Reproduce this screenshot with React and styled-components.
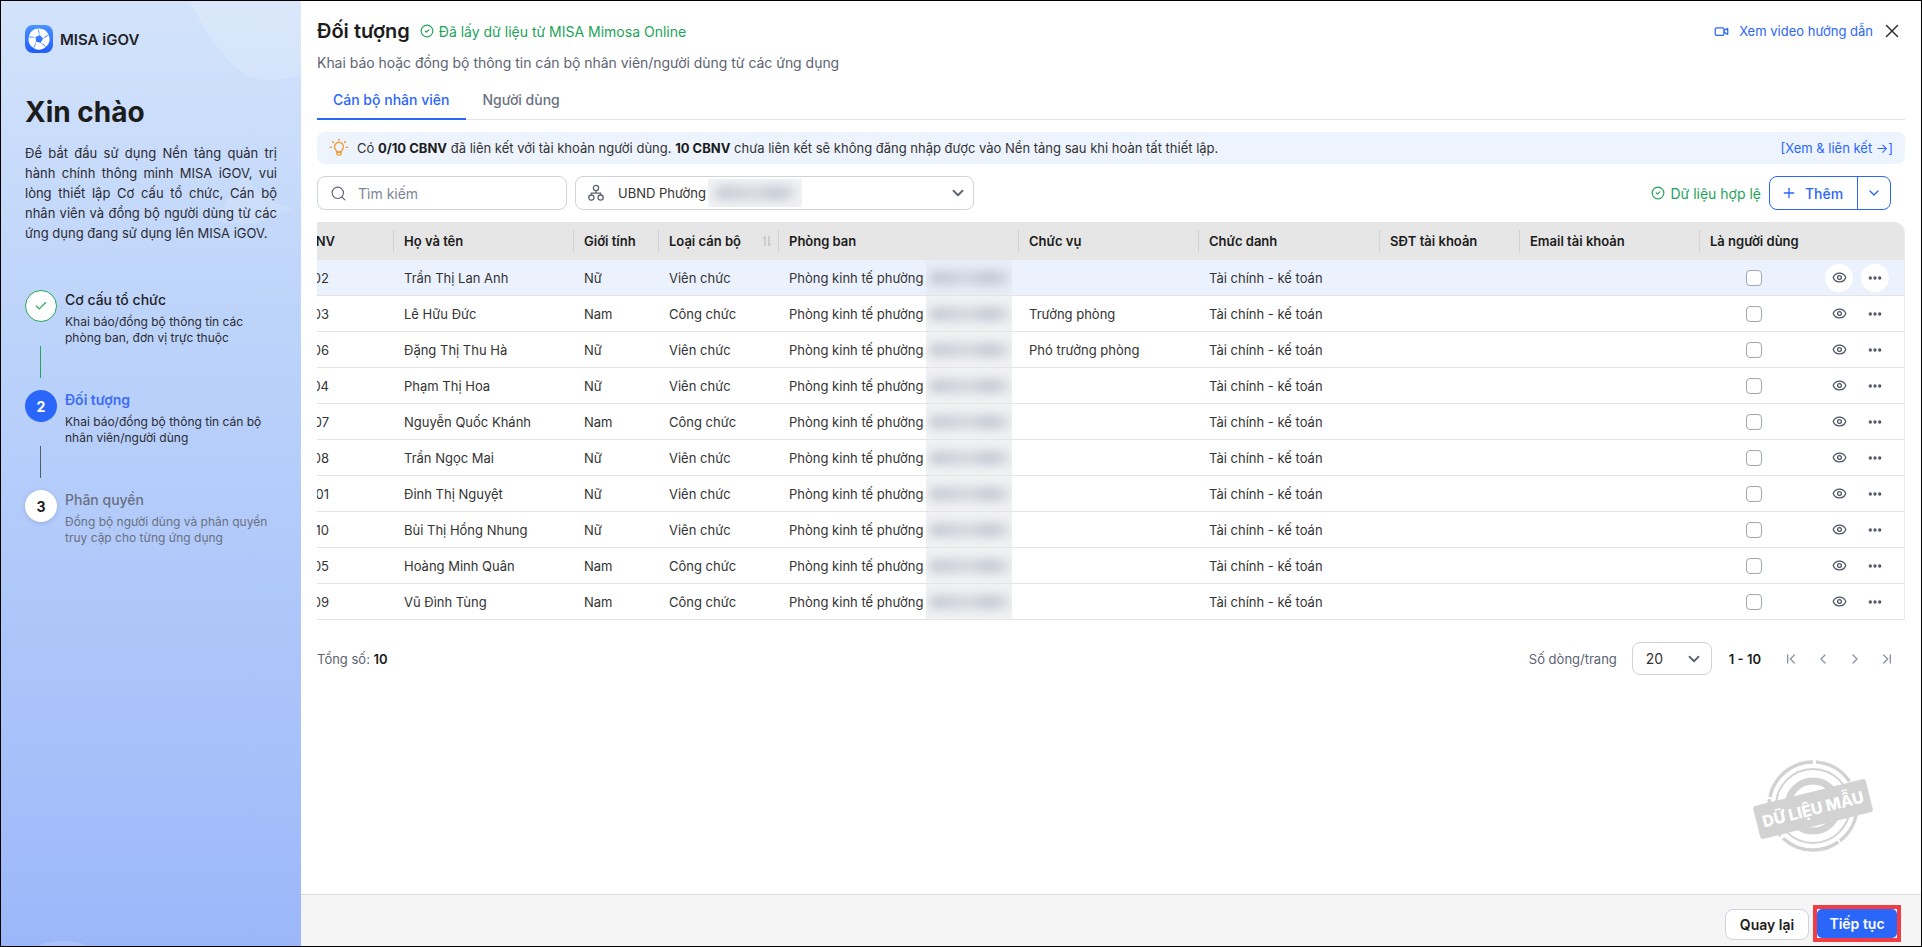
import React from 'react';
import styled, { createGlobalStyle } from 'styled-components';
import {
  CircleCheck, Video, X, Search, ChevronDown, Plus, Eye, Ellipsis,
  ChevronLeft, ChevronRight, ChevronFirst, ChevronLast, Check,
} from 'lucide-react';

const Global = createGlobalStyle`
  html, body { margin: 0; padding: 0; background: #fff; }
  * { box-sizing: border-box; }
  body { font-family: Inter, "Noto Sans", sans-serif; color: #333; overflow: hidden; }
`;

const Frame = styled.div`
  width: 1922px;
  height: 947px;
  border: 1px solid #000;
  display: flex;
  overflow: hidden;
`;

/* left panel */
const Side = styled.aside`
  position: relative;
  flex: 0 0 300px;
  padding: 24px;
  overflow: hidden;
  background: linear-gradient(180deg, #d3e3fb 0%, #bcd3fa 35%, #a9c3fa 75%, #9cb7f9 100%);
`;
const SideDecor = styled.svg`
  position: absolute;
  inset: 0;
  width: 300px;
  height: 945px;
  pointer-events: none;
`;
const Brand = styled.div`
  position: relative;
  display: flex;
  align-items: center;
  gap: 7px;
  height: 28px;
  font-size: 15px;
  font-weight: 600;
  color: #1f2228;
`;
const Hello = styled.h1`
  position: relative;
  margin: 41px 0 13px;
  font-size: 28px;
  line-height: 36px;
  font-weight: 700;
  color: #1c1c1c;
`;
const Intro = styled.p`
  position: relative;
  margin: 0 0 47px;
  font-size: 13px;
  line-height: 20px;
  text-align: justify;
  color: #2b2b33;
`;
const Step = styled.div`
  position: relative;
  display: flex;
  gap: 8px;
`;
const StepRail = styled.div`
  flex: 0 0 32px;
  display: flex;
  flex-direction: column;
  align-items: center;
`;
const StepDot = styled.div`
  width: 32px;
  height: 32px;
  border-radius: 50%;
  display: flex;
  align-items: center;
  justify-content: center;
  font-size: 14px;
  font-weight: 700;
  color: ${p => (p.$state === 'active' ? '#fff' : '#1c1c1c')};
  background: ${p => (p.$state === 'active' ? '#2b66fb' : '#fff')};
  border: ${p => (p.$state === 'done' ? '1px solid #25a55a' : 'none')};
  box-shadow: ${p => (p.$state === 'todo' ? '0 1px 4px rgba(60,80,130,.25)' : 'none')};
`;
const StepLine = styled.div`
  width: 1px;
  height: 32px;
  margin: 24px 1px 12px 0;
  background: ${p => p.$color};
`;
const StepTitle = styled.div`
  font-size: 14px;
  line-height: 20px;
  font-weight: ${p => (p.$state === 'active' ? 600 : 500)};
  color: ${p => (p.$state === 'active' ? '#3b6cfb' : p.$state === 'todo' ? '#6a7080' : '#1f2228')};
`;
const StepDesc = styled.div`
  margin-top: 4px;
  font-size: 12px;
  line-height: 16px;
  color: ${p => (p.$state === 'todo' ? '#6a7080' : '#2b2b33')};
`;

/* right panel */
const Main = styled.main`
  position: relative;
  flex: 1;
  min-width: 0;
  display: flex;
  flex-direction: column;
  background: #fff;
`;
const Content = styled.div`
  flex: 1;
  padding: 16px 16px 0;
`;
const TitleRow = styled.div`
  display: flex;
  align-items: center;
  height: 28px;
  padding-right: 2px;
`;
const Title = styled.h2`
  margin: 0 10px 0 0;
  font-size: 20px;
  font-weight: 600;
  color: #1c1c1c;
`;
const GreenNote = styled.span`
  display: inline-flex;
  align-items: center;
  gap: 5px;
  font-size: 14px;
  color: #22a35a;
`;
const VideoLink = styled.a`
  margin-left: auto;
  display: inline-flex;
  align-items: center;
  gap: 10px;
  font-size: 13px;
  color: #2b66fb;
`;
const CloseBtn = styled.span`
  display: inline-flex;
  margin-left: 8px;
  color: #333;
`;
const Subtitle = styled.div`
  margin-top: 8px;
  font-size: 14px;
  line-height: 20px;
  letter-spacing: -0.03px;
  color: #5c6370;
`;
const Tabs = styled.div`
  display: flex;
  margin-top: 9px;
  height: 38px;
  border-bottom: 1px solid #e4e4e4;
`;
const Tab = styled.div`
  height: 38px;
  padding: 0 17px 2px 16px;
  display: flex;
  align-items: center;
  font-size: 14px;
  font-weight: 500;
  color: ${p => (p.$active ? '#2b66fb' : '#6b7280')};
  border-bottom: 2px solid ${p => (p.$active ? '#2b66fb' : 'transparent')};
`;
const Banner = styled.div`
  margin-top: 12px;
  height: 32px;
  padding: 0 12px 0 12px;
  display: flex;
  align-items: center;
  border-radius: 8px;
  background: #eef4fe;
  font-size: 13px;
  color: #333;
  b { font-weight: 700; color: #1c1c1c; }
`;
const BannerIcon = styled.svg`
  flex: 0 0 20px;
  margin-right: 8px;
`;
const BannerLink = styled.a`
  margin-left: auto;
  color: #2b66fb;
`;
const Toolbar = styled.div`
  margin-top: 12px;
  height: 34px;
  padding-right: 14px;
  display: flex;
  align-items: stretch;
`;
const SearchBox = styled.div`
  width: 250px;
  padding: 0 12px;
  display: flex;
  align-items: center;
  gap: 11px;
  border: 1px solid #cfd3da;
  border-radius: 8px;
  font-size: 14px;
  color: #7d8696;
  svg { color: #5c6370; }
`;
const UnitSelect = styled.div`
  width: 399px;
  margin-left: 8px;
  padding: 0 6px 0 12px;
  display: flex;
  align-items: center;
  border: 1px solid #cfd3da;
  border-radius: 8px;
  font-size: 13px;
  color: #333;
  svg { color: #5c6370; }
`;
const UnitName = styled.span`
  margin: 0 2px 0 14px;
`;
const Caret = styled(ChevronDown)`
  margin-left: auto;
`;
const ValidNote = styled(GreenNote)`
  margin-left: auto;
  margin-right: 8px;
`;
const SplitBtn = styled.div`
  display: flex;
  width: 122px;
  border: 1.5px solid #2b66fb;
  border-radius: 8px;
  color: #2b66fb;
  font-size: 14px;
  font-weight: 500;
`;
const SplitMain = styled.div`
  flex: 1;
  display: flex;
  align-items: center;
  justify-content: center;
  gap: 8px;
  padding-right: 3px;
  border-right: 1.5px solid #2b66fb;
`;
const SplitSide = styled.div`
  flex: 0 0 32px;
  display: flex;
  align-items: center;
  justify-content: center;
`;

/* table */
const COLS = '76px 180px 85px 120px 240px 180px 181px 140px 180px 1fr';
const Table = styled.div`
  margin-top: 12px;
  border-right: 1px solid #ececec;
  border-top-right-radius: 10px;
`;
const HeadRow = styled.div`
  display: grid;
  grid-template-columns: ${COLS};
  align-items: center;
  height: 38px;
  background: #e6e6e6;
  border-top-right-radius: 10px;
  font-size: 13px;
  font-weight: 600;
  color: #1c1c1c;
`;
const HeadCell = styled.div`
  height: 22px;
  padding: 0 6px 0 10px;
  display: flex;
  align-items: center;
  justify-content: space-between;
  border-left: 1px solid #d2d2d2;
  white-space: nowrap;
`;
const CodeHead = styled.div`
  height: 22px;
  padding-right: 58px;
  display: flex;
  align-items: center;
  justify-content: flex-end;
  overflow: hidden;
  white-space: nowrap;
`;
const Row = styled.div`
  display: grid;
  grid-template-columns: ${COLS};
  height: 36px;
  border-bottom: 1px solid #e4e4e4;
  background: ${p => (p.$selected ? '#ebf2fe' : '#fff')};
  font-size: 13px;
  color: #333;
`;
const Cell = styled.div`
  padding-left: 11px;
  display: flex;
  align-items: center;
  white-space: nowrap;
  overflow: hidden;
`;
const CodeCell = styled.div`
  padding-right: 64px;
  display: flex;
  align-items: center;
  justify-content: flex-end;
  overflow: hidden;
  white-space: nowrap;
`;
const Patch = styled.span`
  align-self: stretch;
  flex: 0 0 86px;
  margin-left: 3px;
  display: flex;
  align-items: center;
  justify-content: center;
  overflow: hidden;
  background: ${p => (p.$tint ? '#e8edf6' : '#f1f2f4')};
`;
const Smudge = styled.span`
  display: block;
  width: 80px;
  height: 12px;
  border-radius: 6px;
  background: linear-gradient(90deg, #a2a9ba 0%, #c3c8d2 50%, #a2a9ba 75%, #c3c8d2 100%);
  opacity: .7;
  filter: blur(6px);
`;
const UnitPatch = styled(Patch)`
  flex: 0 0 94px;
  margin: 2px 0;
  background: #f1f2f4;
`;
const UserCell = styled.div`
  display: flex;
  align-items: center;
  padding-left: 47px;
`;
const Tick = styled.span`
  width: 16px;
  height: 16px;
  border: 1px solid #a0a6b4;
  border-radius: 4px;
  background: #fff;
`;
const RoundBtn = styled.span`
  width: 28px;
  height: 28px;
  border-radius: 50%;
  display: flex;
  align-items: center;
  justify-content: center;
  color: #4b5260;
  background: ${p => (p.$on ? '#fff' : 'transparent')};
  margin-left: ${p => p.$gap}px;
`;

const Pager = styled.div`
  margin-top: 22px;
  height: 33px;
  padding-right: 2px;
  display: flex;
  align-items: center;
  font-size: 13px;
  color: #5c6370;
  b { font-weight: 600; color: #1c1c1c; }
`;
const PageSize = styled.div`
  width: 80px;
  height: 33px;
  margin: 0 17px 0 15px;
  padding: 0 8px 0 13px;
  display: flex;
  align-items: center;
  justify-content: space-between;
  border: 1px solid #cfd3da;
  border-radius: 8px;
  font-size: 14px;
  color: #333;
  svg { color: #5c6370; }
`;
const PagerLeft = styled.span`
  margin-right: auto;
`;
const Range = styled.b`
  margin-right: 14px;
`;
const PageBtn = styled.span`
  width: 32px;
  display: flex;
  justify-content: center;
  color: #8d93a0;
`;

const Stamp = styled.svg`
  position: absolute;
  right: 46px;
  bottom: 90px;
  pointer-events: none;
`;

const BottomBar = styled.footer`
  flex: 0 0 52px;
  padding: 10px 20px 0 0;
  display: flex;
  justify-content: flex-end;
  align-items: flex-start;
  gap: 4px;
  background: #f5f5f5;
  border-top: 1px solid #d9d9d9;
`;
const BackBtn = styled.div`
  width: 84px;
  height: 31px;
  margin-top: 4px;
  display: flex;
  align-items: center;
  justify-content: center;
  border: 1px solid #d0d3da;
  border-radius: 8px;
  background: #fff;
  font-size: 14px;
  font-weight: 600;
  color: #1c1c1c;
`;
const Marker = styled.div`
  width: 88px;
  height: 37px;
  border: 4px solid #f23d45;
  background: #fff;
`;
const NextBtn = styled.div`
  height: 100%;
  display: flex;
  align-items: center;
  justify-content: center;
  border-radius: 5px;
  background: #2b66fb;
  font-size: 14px;
  font-weight: 600;
  color: #fff;
`;

const Logo = () => (
  <svg width="28" height="28" viewBox="0 0 28 28">
    <defs>
      <linearGradient id="lg" x1="0" y1="0" x2="0" y2="1">
        <stop offset="0" stopColor="#4a93ff" />
        <stop offset="1" stopColor="#1f5dfa" />
      </linearGradient>
    </defs>
    <rect width="28" height="28" rx="8" fill="url(#lg)" />
    {[0, 72, 144, 216, 288].map(a => (
      <path
        key={a}
        transform={`rotate(${a} 14 14)`}
        d="M13.1 3.5A10.5 10.5 0 0 1 23.5 9.6Q20.5 10.5 18 13.6L14.9 10.1Q14.2 6.5 13.1 3.5Z"
        fill="#fff"
      />
    ))}
  </svg>
);

const Bulb = () => (
  <BannerIcon width="20" height="20" viewBox="0 0 20 20" fill="none" stroke="#f29a2e" strokeWidth="1.4" strokeLinecap="round">
    <path d="M6.6 11.6a4.4 4.4 0 1 1 6.8 0c-.6.8-1 1.3-1.1 2.4H7.7c-.1-1.1-.5-1.6-1.1-2.4Z" />
    <path d="M8 16.4c.3 1 3.7 1 4 0V14H8Z" />
    <path d="M10 1.2v1.2M3.6 3.6l.9.9M16.4 3.6l-.9.9M1.4 9.4h1.2M17.4 9.4h1.2" />
  </BannerIcon>
);

const OrgIcon = () => (
  <svg width="16" height="18" viewBox="0 0 16 18" fill="none" stroke="currentColor" strokeWidth="1.3">
    <circle cx="8" cy="4" r="2.6" />
    <circle cx="3.4" cy="13.6" r="2.6" />
    <circle cx="12.6" cy="13.6" r="2.6" />
    <path d="M8 6.6v2.6M3.4 11V9.2h9.2V11" />
  </svg>
);

const SortIcon = () => (
  <svg width="10" height="12" viewBox="0 0 10 12" fill="none" stroke="#b4b4b4" strokeWidth="1">
    <path d="M3 11V1.5L1 3.5M7 1v9.5l2-2" />
  </svg>
);

const DUMMY = [
  ['NV0002', 'Trần Thị Lan Anh', 'Nữ', 'Viên chức', ''],
  ['NV0003', 'Lê Hữu Đức', 'Nam', 'Công chức', 'Trưởng phòng'],
  ['NV0006', 'Đặng Thị Thu Hà', 'Nữ', 'Viên chức', 'Phó trưởng phòng'],
  ['NV0004', 'Phạm Thị Hoa', 'Nữ', 'Viên chức', ''],
  ['NV0007', 'Nguyễn Quốc Khánh', 'Nam', 'Công chức', ''],
  ['NV0008', 'Trần Ngọc Mai', 'Nữ', 'Viên chức', ''],
  ['NV0001', 'Đinh Thị Nguyệt', 'Nữ', 'Viên chức', ''],
  ['NV0010', 'Bùi Thị Hồng Nhung', 'Nữ', 'Viên chức', ''],
  ['NV0005', 'Hoàng Minh Quân', 'Nam', 'Công chức', ''],
  ['NV0009', 'Vũ Đình Tùng', 'Nam', 'Công chức', ''],
];

const STEPS = [
  { state: 'done', title: 'Cơ cấu tổ chức', desc: ['Khai báo/đồng bộ thông tin các', 'phòng ban, đơn vị trực thuộc'], line: '#25a55a' },
  { state: 'active', n: 2, title: 'Đối tượng', desc: ['Khai báo/đồng bộ thông tin cán bộ', 'nhân viên/người dùng'], line: '#555a66' },
  { state: 'todo', n: 3, title: 'Phân quyền', desc: ['Đồng bộ người dùng và phân quyền', 'truy cập cho từng ứng dụng'] },
];

export default function App() {
  return (
    <Frame>
      <Global />
      <Side>
        <SideDecor viewBox="0 0 300 945">
          <path d="M188 0 C205 30 222 62 250 76 C270 84 285 76 300 74 L300 0 Z" fill="#fff" opacity=".18" />
          <path d="M245 170 C250 190 262 198 292 208 C270 214 262 218 258 222 C240 226 226 222 212 220 C222 205 232 190 245 170 Z" fill="#fff" opacity=".13" />
          <ellipse cx="62" cy="948" rx="26" ry="8" fill="#fff" opacity=".15" />
        </SideDecor>
        <Brand><Logo />MISA iGOV</Brand>
        <Hello>Xin chào</Hello>
        <Intro>
          Để bắt đầu sử dụng Nền tảng quản trị hành chính thông minh MISA iGOV, vui lòng thiết lập Cơ cấu tổ chức, Cán bộ nhân viên và đồng bộ người dùng từ các ứng dụng đang sử dụng lên MISA iGOV.
        </Intro>
        {STEPS.map(s => (
          <Step key={s.title}>
            <StepRail>
              <StepDot $state={s.state}>
                {s.state === 'done' ? <Check size={14} color="#25a55a" strokeWidth={2} /> : s.n}
              </StepDot>
              {s.line && <StepLine $color={s.line} />}
            </StepRail>
            <div>
              <StepTitle $state={s.state}>{s.title}</StepTitle>
              <StepDesc $state={s.state}>{s.desc[0]}<br />{s.desc[1]}</StepDesc>
            </div>
          </Step>
        ))}
      </Side>

      <Main>
        <Content>
          <TitleRow>
            <Title>Đối tượng</Title>
            <GreenNote><CircleCheck size={14} />Đã lấy dữ liệu từ MISA Mimosa Online</GreenNote>
            <VideoLink><Video size={15} />Xem video hướng dẫn</VideoLink>
            <CloseBtn><X size={22} strokeWidth={1.6} /></CloseBtn>
          </TitleRow>
          <Subtitle>Khai báo hoặc đồng bộ thông tin cán bộ nhân viên/người dùng từ các ứng dụng</Subtitle>
          <Tabs>
            <Tab $active>Cán bộ nhân viên</Tab>
            <Tab>Người dùng</Tab>
          </Tabs>
          <Banner>
            <Bulb />
            <span>Có <b>0/10 CBNV</b> đã liên kết với tài khoản người dùng. <b>10 CBNV</b> chưa liên kết sẽ không đăng nhập được vào Nền tảng sau khi hoàn tất thiết lập.</span>
            <BannerLink>[Xem &amp; liên kết →]</BannerLink>
          </Banner>
          <Toolbar>
            <SearchBox><Search size={17} strokeWidth={1.6} />Tìm kiếm</SearchBox>
            <UnitSelect>
              <OrgIcon />
              <UnitName>UBND Phường</UnitName>
              <UnitPatch><Smudge /></UnitPatch>
              <Caret size={18} strokeWidth={2.4} />
            </UnitSelect>
            <ValidNote><CircleCheck size={14} />Dữ liệu hợp lệ</ValidNote>
            <SplitBtn>
              <SplitMain><Plus size={16} />Thêm</SplitMain>
              <SplitSide><ChevronDown size={16} /></SplitSide>
            </SplitBtn>
          </Toolbar>
          <Table>
            <HeadRow>
              <CodeHead>Mã NV</CodeHead>
              <HeadCell>Họ và tên</HeadCell>
              <HeadCell>Giới tính</HeadCell>
              <HeadCell>Loại cán bộ<SortIcon /></HeadCell>
              <HeadCell>Phòng ban</HeadCell>
              <HeadCell>Chức vụ</HeadCell>
              <HeadCell>Chức danh</HeadCell>
              <HeadCell>SĐT tài khoản</HeadCell>
              <HeadCell>Email tài khoản</HeadCell>
              <HeadCell>Là người dùng</HeadCell>
            </HeadRow>
            {DUMMY.map((r, i) => (
              <Row key={r[0]} $selected={i === 0}>
                <CodeCell>{r[0]}</CodeCell>
                <Cell>{r[1]}</Cell>
                <Cell>{r[2]}</Cell>
                <Cell>{r[3]}</Cell>
                <Cell>Phòng kinh tế phường<Patch $tint={i === 0}><Smudge /></Patch></Cell>
                <Cell>{r[4]}</Cell>
                <Cell>Tài chính - kế toán</Cell>
                <Cell />
                <Cell />
                <UserCell>
                  <Tick />
                  <RoundBtn $on={i === 0} $gap={63}><Eye size={15} strokeWidth={2} /></RoundBtn>
                  <RoundBtn $on={i === 0} $gap={8}><Ellipsis size={16} strokeWidth={3} /></RoundBtn>
                </UserCell>
              </Row>
            ))}
          </Table>
          <Pager>
            <PagerLeft>Tổng số: <b>10</b></PagerLeft>
            <span>Số dòng/trang</span>
            <PageSize>20<ChevronDown size={18} strokeWidth={2.4} /></PageSize>
            <Range>1 - 10</Range>
            <PageBtn><ChevronFirst size={16} /></PageBtn>
            <PageBtn><ChevronLeft size={16} /></PageBtn>
            <PageBtn><ChevronRight size={16} /></PageBtn>
            <PageBtn><ChevronLast size={16} /></PageBtn>
          </Pager>
        </Content>
        <Stamp width="124" height="100" viewBox="0 0 124 100">
          <g fill="none" stroke="#d2d2d2">
            <circle cx="62" cy="50" r="44" strokeWidth="3.5" strokeDasharray="40 2 60 3" />
            <circle cx="62" cy="50" r="37" strokeWidth="2" />
            <circle cx="62" cy="50" r="25" strokeWidth="7" />
          </g>
          <g transform="rotate(-14 62 53)">
            <rect x="4" y="36" width="116" height="34" rx="3" fill="#d2d2d2" />
            <text x="62" y="59" textAnchor="middle" fontSize="16" fontWeight="800" fill="#fff" fontFamily="Inter, sans-serif">DỮ LIỆU MẪU</text>
          </g>
        </Stamp>
        <BottomBar>
          <BackBtn>Quay lại</BackBtn>
          <Marker><NextBtn>Tiếp tục</NextBtn></Marker>
        </BottomBar>
      </Main>
    </Frame>
  );
}
